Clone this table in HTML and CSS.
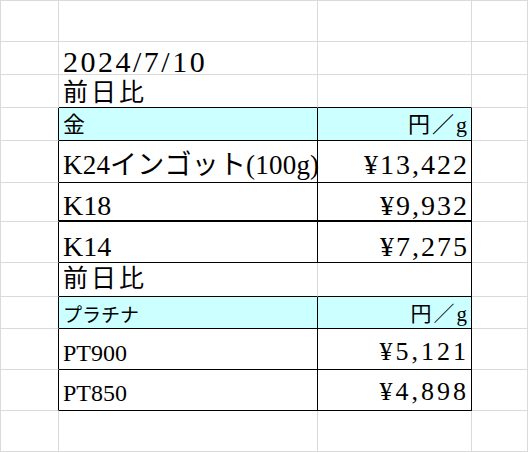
FILE: index.html
```html
<!DOCTYPE html>
<html lang="ja">
<head>
<meta charset="utf-8">
<title>金・プラチナ価格</title>
<link rel="stylesheet" href="styles.css">
</head>
<body>
<div class="sheet">
  <!-- row 1 -->
  <div class="cell"></div><div class="cell"></div><div class="cell"></div><div class="cell"></div>
  <!-- row 2 -->
  <div class="cell"></div>
  <div class="cell"><span class="date">2024/7/10</span></div>
  <div class="cell"></div><div class="cell"></div>
  <!-- row 3 -->
  <div class="cell"></div>
  <div class="cell bb"><span class="label lab1">前日比</span></div>
  <div class="cell bb"></div><div class="cell"></div>
  <!-- row 4 -->
  <div class="cell br"></div>
  <div class="cell hd br bb"><span class="head h1">金</span></div>
  <div class="cell hd br bb right"><span class="unit h1">円／g</span></div>
  <div class="cell"></div>
  <!-- row 5 -->
  <div class="cell br"></div>
  <div class="cell br bb"><span class="item k24">K24インゴット(100g)</span></div>
  <div class="cell br bb right"><span class="price p5">¥13,422</span></div>
  <div class="cell"></div>
  <!-- row 6 -->
  <div class="cell br"></div>
  <div class="cell br bb2"><span class="item p6">K18</span></div>
  <div class="cell br bb2 right"><span class="price p6">¥9,932</span></div>
  <div class="cell"></div>
  <!-- row 7 -->
  <div class="cell br"></div>
  <div class="cell br bb"><span class="item p7">K14</span></div>
  <div class="cell br bb right"><span class="price p7">¥7,275</span></div>
  <div class="cell"></div>
  <!-- row 8 -->
  <div class="cell br"></div>
  <div class="cell bb"><span class="label lab2">前日比</span></div>
  <div class="cell br bb"></div>
  <div class="cell"></div>
  <!-- row 9 -->
  <div class="cell br"></div>
  <div class="cell hd br bb"><span class="head2">プラチナ</span></div>
  <div class="cell hd br bb right"><span class="unit2">円／g</span></div>
  <div class="cell"></div>
  <!-- row 10 -->
  <div class="cell br"></div>
  <div class="cell br bb"><span class="pt r10">PT900</span></div>
  <div class="cell br bb right"><span class="price2 r10n">¥5,121</span></div>
  <div class="cell"></div>
  <!-- row 11 -->
  <div class="cell br"></div>
  <div class="cell br bb"><span class="pt r11">PT850</span></div>
  <div class="cell br bb right"><span class="price2 r11n">¥4,898</span></div>
  <div class="cell"></div>
  <!-- row 12 -->
  <div class="cell"></div><div class="cell"></div><div class="cell"></div><div class="cell"></div>
</div>
</body>
</html>
```

FILE: styles.css
```css
html, body {
  margin: 0;
  padding: 0;
  background: #ffffff;
}

.sheet {
  display: grid;
  grid-template-columns: 58px 259px 154px 56px;
  grid-template-rows: 41px 33px 33px 33px 42px 39px 41px 34px 32px 41px 41px 41px;
  width: max-content;
  border-top: 1px solid #dadada;
  border-left: 1px solid #dadada;
  font-family: "Liberation Serif", "Noto Sans CJK JP", serif;
  color: #000000;
}

.cell {
  box-sizing: border-box;
  border-right: 1px solid #dadada;
  border-bottom: 1px solid #dadada;
  display: flex;
  align-items: flex-end;
  line-height: 1;
  white-space: nowrap;
  padding: 0 4px;
  min-width: 0;
}

.br { border-right-color: #000000; }
.bb { border-bottom-color: #000000; }
.bb2 { border-bottom: 2px solid #000000; }
.hd { background: #ccffff; }
.right { justify-content: flex-end; padding-right: 2px; }

.date {
  font-size: 30px;
  letter-spacing: 2.5px;
  margin-bottom: -3px;
}

.label {
  font-size: 25px;
  letter-spacing: 3px;
}
.lab1 { margin-bottom: 2px; }
.lab2 { margin-bottom: 5.5px; }

.head, .unit {
  font-size: 22px;
}
.unit { letter-spacing: 2px; }
.h1 { margin-bottom: 4px; }

.item {
  font-size: 28px;
}
.k24 {
  font-size: 27px;
  letter-spacing: 0.2px;
  margin-bottom: 3.5px;
}

.price {
  font-size: 28px;
  letter-spacing: 2px;
}
.p5 { margin-bottom: 3.5px; }
.p6 { margin-bottom: 0.5px; }
.p7 { margin-bottom: 1.5px; }

.head2, .unit2 {
  font-size: 19px;
  margin-bottom: 3.5px;
}
.unit2 { font-size: 21px; letter-spacing: 2px; }

.pt {
  font-size: 24px;
}
.price2 {
  font-size: 26px;
  letter-spacing: 3px;
}
.r10, .r10n { margin-bottom: 4px; }
.r11, .r11n { margin-bottom: 5px; }
```
